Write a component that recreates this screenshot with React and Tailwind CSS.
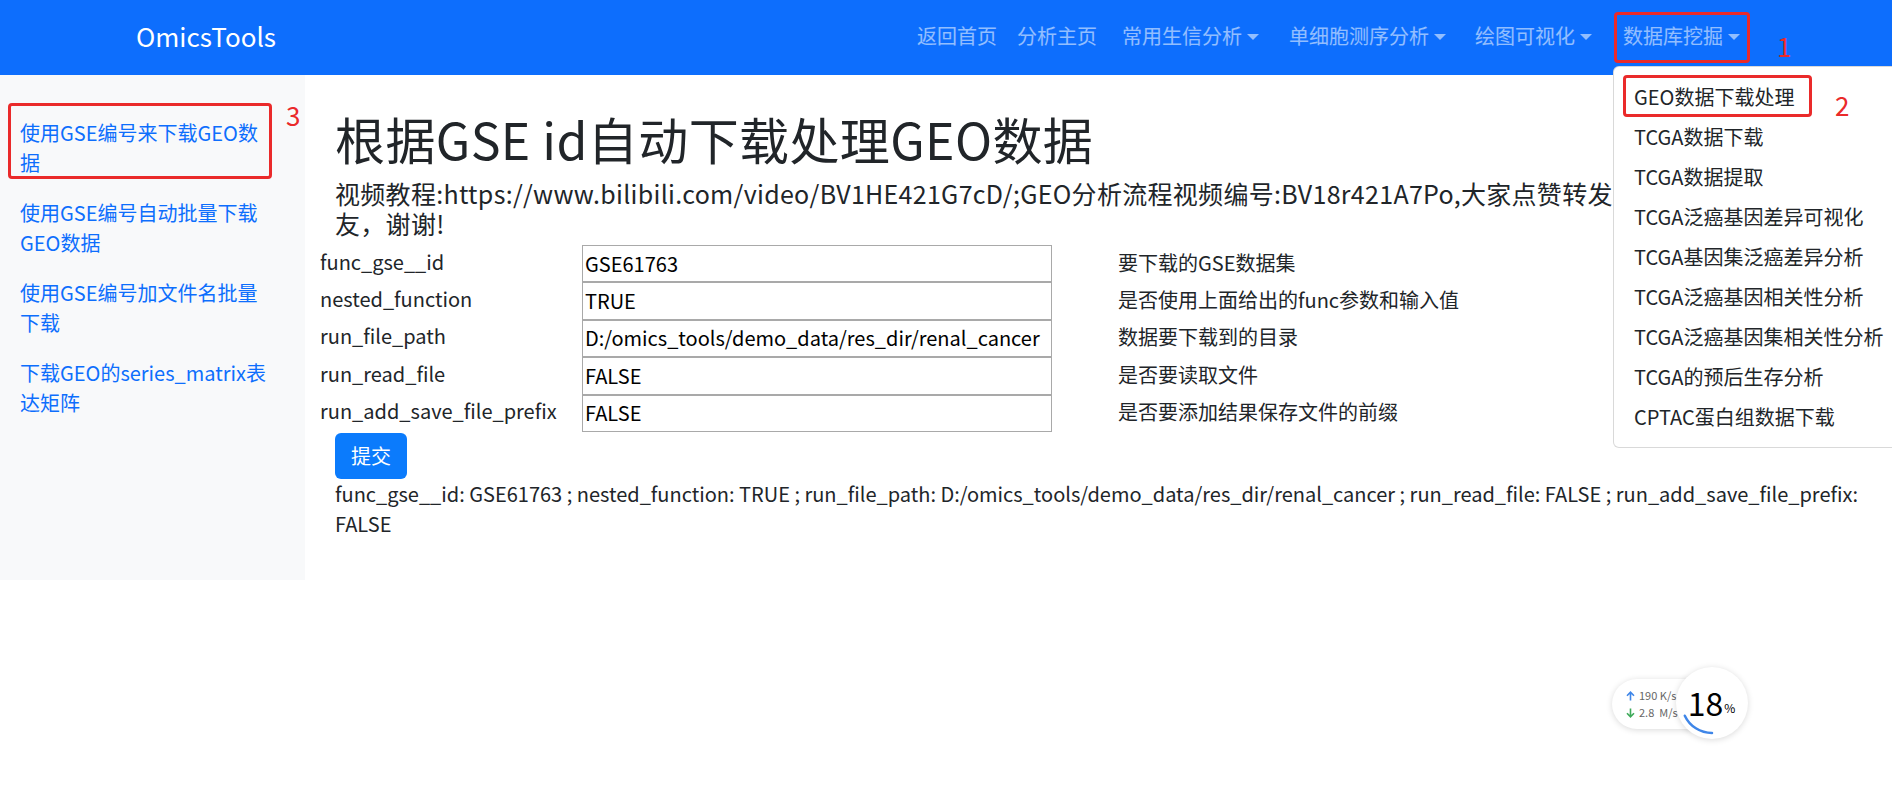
function Caret() {
  return (
    <span className="ml-[5px] inline-block h-0 w-0 translate-y-[1px] border-x-[6px] border-t-[6px] border-x-transparent border-t-current" />
  );
}

const navItems = [
  { label: "返回首页", ml: "", caret: false },
  { label: "分析主页", ml: "ml-[20px]", caret: false },
  { label: "常用生信分析", ml: "ml-[25px]", caret: true },
  { label: "单细胞测序分析", ml: "ml-[30px]", caret: true },
  { label: "绘图可视化", ml: "ml-[29px]", caret: true },
  { label: "数据库挖掘", ml: "ml-[31px]", caret: true },
];

const sideItems = [
  ["使用GSE编号来下载GEO数", "据"],
  ["使用GSE编号自动批量下载", "GEO数据"],
  ["使用GSE编号加文件名批量", "下载"],
  ["下载GEO的series_matrix表", "达矩阵"],
];

const rows = [
  ["func_gse__id", "GSE61763", "要下载的GSE数据集"],
  ["nested_function", "TRUE", "是否使用上面给出的func参数和输入值"],
  ["run_file_path", "D:/omics_tools/demo_data/res_dir/renal_cancer", "数据要下载到的目录"],
  ["run_read_file", "FALSE", "是否要读取文件"],
  ["run_add_save_file_prefix", "FALSE", "是否要添加结果保存文件的前缀"],
];

const dropItems = [
  "GEO数据下载处理",
  "TCGA数据下载",
  "TCGA数据提取",
  "TCGA泛癌基因差异可视化",
  "TCGA基因集泛癌差异分析",
  "TCGA泛癌基因相关性分析",
  "TCGA泛癌基因集相关性分析",
  "TCGA的预后生存分析",
  "CPTAC蛋白组数据下载",
];

export default function App() {
  return (
    <div className="relative h-[787px] w-[1892px] overflow-hidden bg-white font-['Noto_Sans_CJK_SC','Noto_Sans',sans-serif] text-[#212529]">
      {/* Navbar */}
      <nav className="flex h-[75px] items-center bg-[#0d6efd] pb-[3px]">
        <div className="pl-[136px] text-[26px] leading-none text-white">OmicsTools</div>
        <ul className="ml-auto flex items-center pr-[152px] text-[20px] leading-[30px] text-white/55">
          {navItems.map((it) => (
            <li key={it.label} className={`flex items-center ${it.ml}`}>
              {it.label}
              {it.caret && <Caret />}
            </li>
          ))}
        </ul>
      </nav>

      <div className="flex">
        {/* Sidebar */}
        <aside className="flex h-[505px] w-[305px] flex-col gap-[20px] bg-[#f8f9fa] pl-[20px] pt-[43px] text-[20px] leading-[30px] text-[#0d6efd]">
          {sideItems.map((lines) => (
            <a key={lines[0]} className="block">
              <span className="block whitespace-nowrap">{lines[0]}</span>
              <span className="block whitespace-nowrap">{lines[1]}</span>
            </a>
          ))}
        </aside>

        {/* Main */}
        <main className="flex-1 pl-[15px] pt-[34px]">
          <h1 className="ml-[15px] whitespace-nowrap text-[50px] font-normal leading-[58px] tracking-[0.4px]">
            根据GSE id自动下载处理GEO数据
          </h1>
          <div className="ml-[15px] mt-[11px] text-[25px] leading-[30px] tracking-[0.3px]">
            <div className="whitespace-nowrap">
              视频教程:https://www.bilibili.com/video/BV1HE421G7cD/;GEO分析流程视频编号:BV18r421A7Po,大家点赞转发给朋
            </div>
            <div>友，谢谢!</div>
          </div>

          <div className="mt-[7px] flex flex-col">
            {rows.map(([label, value, desc]) => (
              <div key={label} className="flex h-[37.4px] items-center text-[20px] leading-[30px]">
                <div className="w-[262px] -translate-y-[2px] whitespace-nowrap">{label}</div>
                <div className="flex h-[37.4px] w-[470px] items-center overflow-hidden whitespace-nowrap border border-[#a9a9a9] pl-[2px] text-black">
                  {value}
                </div>
                <div className="ml-[66px] -translate-y-[1px] whitespace-nowrap">{desc}</div>
              </div>
            ))}
          </div>

          <button className="ml-[15px] mt-[1px] h-[46px] w-[72px] rounded-[6px] bg-[#0b7bfc] text-[20px] leading-[30px] text-white">
            提交
          </button>

          <div className="ml-[15px] text-[20px] leading-[30px]">
            <div className="whitespace-nowrap">
              func_gse__id: GSE61763 ; nested_function: TRUE ; run_file_path: D:/omics_tools/demo_data/res_dir/renal_cancer ; run_read_file: FALSE ; run_add_save_file_prefix:
            </div>
            <div>FALSE</div>
          </div>
        </main>
      </div>

      {/* Dropdown menu */}
      <div className="absolute left-[1613px] top-[66px] w-[300px] rounded-[6px] border border-black/15 bg-white py-[10px]">
        {dropItems.map((d) => (
          <div key={d} className="whitespace-nowrap px-[20px] py-[5px] text-[20px] leading-[30px] text-[#212529]">
            {d}
          </div>
        ))}
      </div>

      {/* Annotations */}
      <div className="absolute left-[1614px] top-[12px] h-[51px] w-[136px] rounded-[4px] border-[3px] border-[#ea2a2a]" />
      <div className="absolute left-[1777px] top-[31px] text-[26px] leading-[30px] text-[#ea2a2a]">1</div>
      <div className="absolute left-[1623px] top-[75px] h-[42px] w-[189px] rounded-[4px] border-[3px] border-[#ea2a2a]" />
      <div className="absolute left-[1835px] top-[90px] text-[26px] leading-[30px] text-[#ea2a2a]">2</div>
      <div className="absolute left-[8px] top-[103px] h-[76px] w-[264px] rounded-[4px] border-[3px] border-[#ea2a2a]" />
      <div className="absolute left-[286px] top-[100px] text-[26px] leading-[30px] text-[#ea2a2a]">3</div>

      {/* Network speed widget */}
      <div className="absolute left-[1612px] top-[679px] flex h-[50px] w-[100px] flex-col justify-center rounded-full bg-white pl-[14px] shadow-[0_1px_6px_rgba(0,0,0,0.15)]">
        <div className="flex items-center gap-[4px] text-[11px] leading-[17px] text-[#666]">
          <svg width="9" height="10" viewBox="0 0 9 10">
            <path d="M4.5 9.5V1.5M1 4.8L4.5 1.2 8 4.8" fill="none" stroke="#3f86e8" strokeWidth="1.6" />
          </svg>
          <span>190 K/s</span>
        </div>
        <div className="flex items-center gap-[4px] text-[11px] leading-[17px] text-[#666]">
          <svg width="9" height="10" viewBox="0 0 9 10">
            <path d="M4.5 0.5V8.5M1 5.2L4.5 8.8 8 5.2" fill="none" stroke="#3faa5a" strokeWidth="1.6" />
          </svg>
          <span>2.8&nbsp; M/s</span>
        </div>
      </div>
      <div className="absolute left-[1676px] top-[667px] flex h-[72px] w-[72px] items-center justify-center rounded-full bg-white shadow-[0_1px_6px_rgba(0,0,0,0.15)]">
        <svg className="absolute left-0 top-0" width="72" height="72" viewBox="0 0 72 72">
          <path d="M8.8 48.7 A30 30 0 0 0 36 66" fill="none" stroke="#3f86e8" strokeWidth="2.5" strokeLinecap="round" />
        </svg>
        <span className="relative -translate-x-[1px] -translate-y-[1px] text-[32px] leading-none text-black">18</span>
        <span className="relative mt-[10px] text-[12px] leading-none text-black">%</span>
      </div>
    </div>
  );
}
